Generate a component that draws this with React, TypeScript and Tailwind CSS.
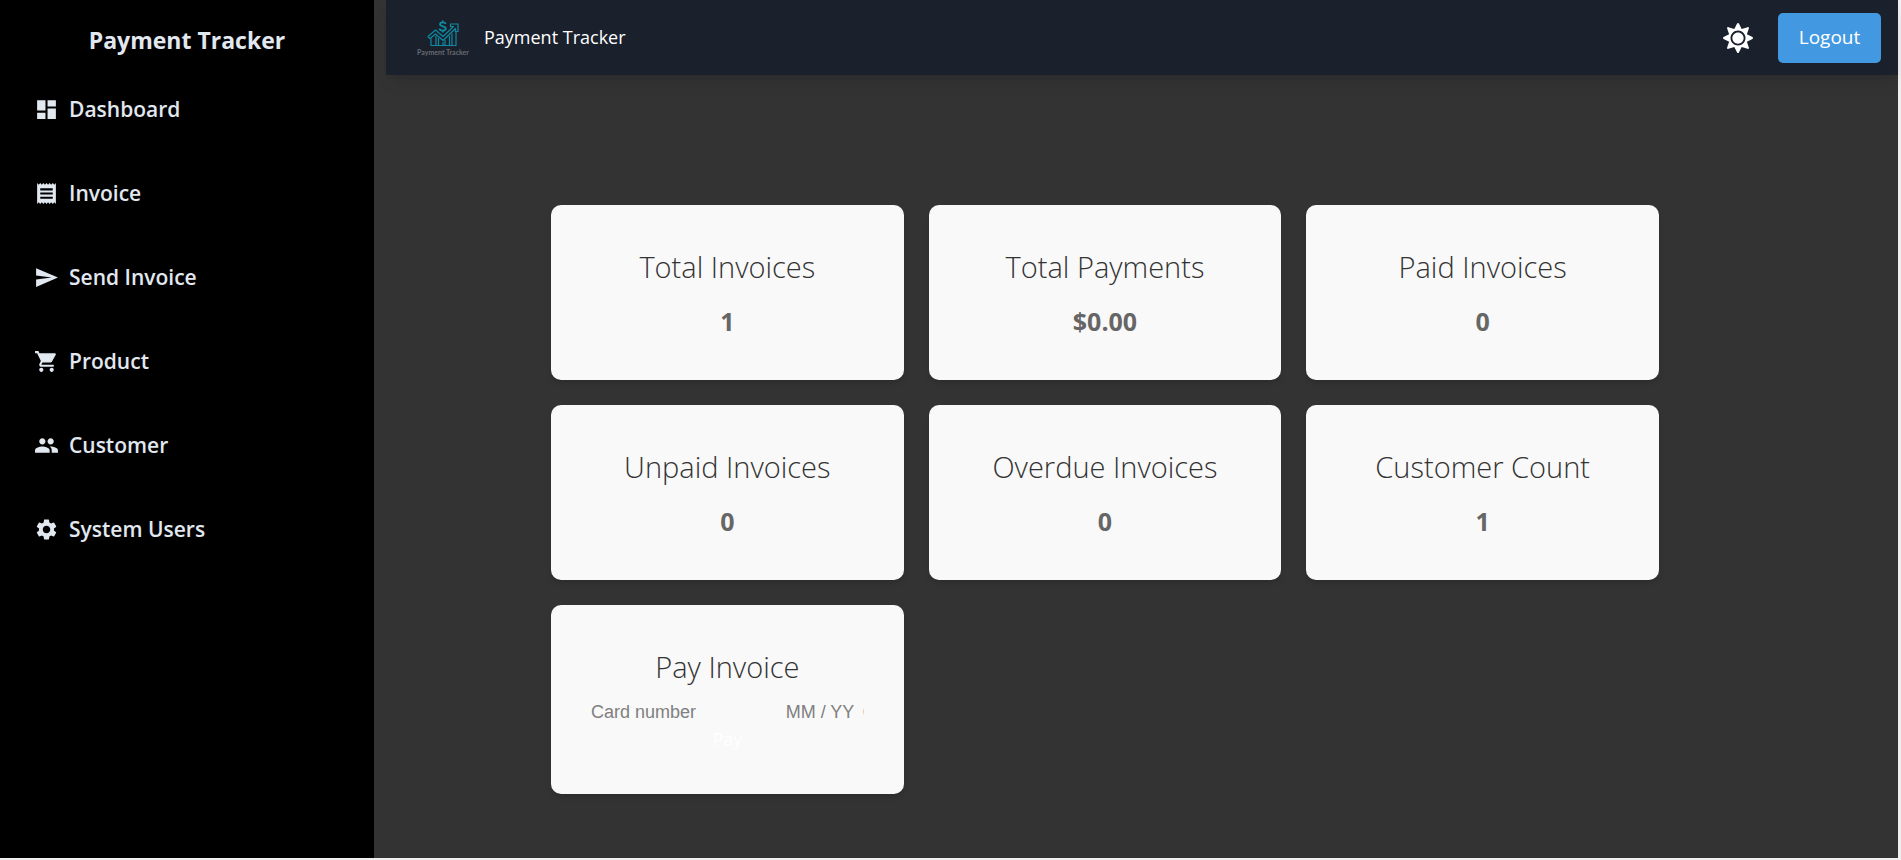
import type { IconType } from "react-icons";
import { FaSun } from "react-icons/fa";
import { MdDashboard, MdPeople, MdReceipt, MdSend, MdSettings, MdShoppingCart } from "react-icons/md";

const links: { label: string; icon: IconType }[] = [
  { label: "Dashboard", icon: MdDashboard },
  { label: "Invoice", icon: MdReceipt },
  { label: "Send Invoice", icon: MdSend },
  { label: "Product", icon: MdShoppingCart },
  { label: "Customer", icon: MdPeople },
  { label: "System Users", icon: MdSettings },
];

const stats = [
  { title: "Total Invoices", value: "1" },
  { title: "Total Payments", value: "$0.00" },
  { title: "Paid Invoices", value: "0" },
  { title: "Unpaid Invoices", value: "0" },
  { title: "Overdue Invoices", value: "0" },
  { title: "Customer Count", value: "1" },
];

const cardClass = "rounded-[10px] bg-[#f9f9f9] px-[40px] pt-[40px] text-center shadow-md";
const titleClass = "text-[29px] leading-[44px] font-[350] text-[#333333]";

function Logo() {
  return (
    <svg viewBox="0 0 54 40" className="h-[40px] w-[54px]" role="img" aria-label="Payment Tracker logo">
      <g fill="none" stroke="#0e8ba3" strokeWidth="1.2" strokeLinejoin="round">
        <path d="M12 18.5 19.500 12l7.500 6.500L37.500 8.500H34.500V6h7.500v7.500h-2.500V10.500L27 22.500l-7.500-6.500-5.500 4.500z" />
        <path d="M15 20.500v7h5V18M22.500 20v7.500h4.500V24M29 22v5.500h4.500V18M36 15.500v12h4V13M20 27.500h2.500M27 27.500h2M33.500 27.500H36" />
        <path strokeWidth="1.8" d="M29.500 6C29.500 3.800 24 3.800 24 6.300S29.800 8 29.800 10.700 23.500 13 23.500 10.500M26.700 2.500v2M26.700 12.500v2" />
      </g>
      <text x="27" y="37" textAnchor="middle" fontSize="7" fontWeight="700" fill="#686b70" className="font-['Lato',sans-serif]">
        Payment Tracker
      </text>
    </svg>
  );
}

export default function App() {
  return (
    <div className="flex min-h-screen bg-[#f0f0f0] pr-[3px] pb-[2px] font-['Open_Sans',sans-serif]">
      <aside className="w-[374px] shrink-0 bg-black px-[34px] pt-[22px] text-[#e2e8f0]">
        <h2 className="text-center text-[23px] leading-[36px] font-bold">Payment Tracker</h2>
        <nav className="flex flex-col gap-[48px] pt-[33px]">
          {links.map(({ label, icon: Icon }) => (
            <a key={label} href="#" className="flex items-center gap-[10px] text-[21px] leading-[36px] font-semibold">
              <Icon size={25} />
              {label}
            </a>
          ))}
        </nav>
      </aside>

      <div className="flex min-w-0 flex-1 flex-col bg-[#333333]">
        <header className="ml-[12px] flex h-[75px] items-center bg-[#1a202c] pr-[17px] pl-[30px] text-white shadow-lg">
          <Logo />
          <span className="ml-[14px] text-[18px]">Payment Tracker</span>
          <button type="button" aria-label="Toggle color mode" className="ml-auto">
            <FaSun size={30} />
          </button>
          <button type="button" className="ml-[25px] h-[50px] min-w-[103px] rounded-[5px] bg-[#4299e1] px-[20px] text-[19px]">
            Logout
          </button>
        </header>

        <main className="pt-[130px] pr-[62px] pb-[64px]">
          <div className="mx-auto grid max-w-[1108px] grid-cols-3 gap-[25px]">
            {stats.map(({ title, value }) => (
              <section key={title} className={`${cardClass} pb-[39px]`}>
                <h3 className={titleClass}>{title}</h3>
                <p className="mt-[12px] text-[25px] leading-[40px] font-bold text-[#666666]">{value}</p>
              </section>
            ))}
            <section className={`${cardClass} pb-[40px]`}>
              <h3 className={titleClass}>Pay Invoice</h3>
              <form onSubmit={(event) => event.preventDefault()}>
                <div className="mt-[11px] flex h-[24px] overflow-hidden font-['Liberation_Sans',sans-serif] text-[18px]">
                  <input
                    aria-label="Card number"
                    placeholder="Card number"
                    className="w-0 min-w-0 grow placeholder:text-[#808080]"
                  />
                  <input
                    aria-label="Expiry date"
                    placeholder="MM / YY"
                    className="w-[77px] shrink-0 placeholder:text-[#808080]"
                  />
                  <input
                    aria-label="Security code"
                    placeholder="CVC"
                    className="w-[1px] shrink-0 placeholder:text-[#808080]"
                  />
                </div>
                <button type="submit" className="block w-full text-[18px] leading-[30px] font-medium text-white">
                  Pay
                </button>
              </form>
            </section>
          </div>
        </main>
      </div>
    </div>
  );
}
